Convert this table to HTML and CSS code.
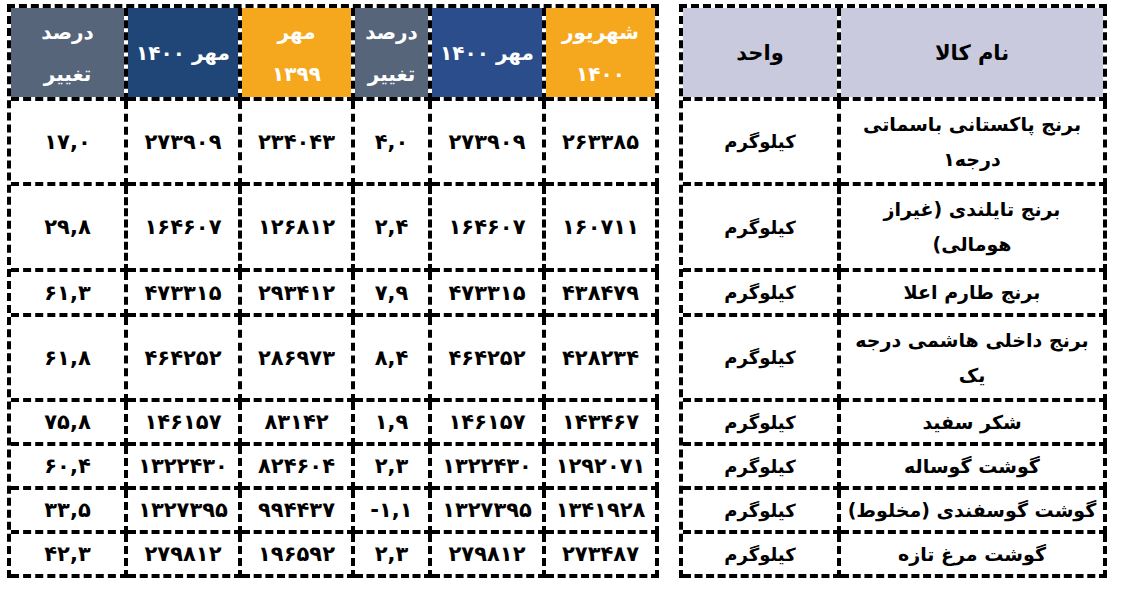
FILE: index.html
```html
<!DOCTYPE html>
<html lang="fa" dir="rtl">
<head>
<meta charset="utf-8">
<title>قیمت کالا</title>
<link rel="stylesheet" href="styles.css">
</head>
<body>
<div class="page">
  <div class="grid names">
    <div class="cell head lav">نام کالا</div>
    <div class="cell head lav">واحد</div>

    <div class="cell name">برنج پاکستانی باسماتی<br>درجه۱</div>
    <div class="cell unit">کیلوگرم</div>
    <div class="cell name">برنج تایلندی (غیراز<br>هومالی)</div>
    <div class="cell unit">کیلوگرم</div>
    <div class="cell name">برنج طارم اعلا</div>
    <div class="cell unit">کیلوگرم</div>
    <div class="cell name">برنج داخلی هاشمی درجه<br>یک</div>
    <div class="cell unit">کیلوگرم</div>
    <div class="cell name">شکر سفید</div>
    <div class="cell unit">کیلوگرم</div>
    <div class="cell name">گوشت گوساله</div>
    <div class="cell unit">کیلوگرم</div>
    <div class="cell name">گوشت گوسفندی (مخلوط)</div>
    <div class="cell unit">کیلوگرم</div>
    <div class="cell name">گوشت مرغ تازه</div>
    <div class="cell unit">کیلوگرم</div>
  </div>

  <div class="grid prices">
    <div class="cell head orange">شهریور<br>۱۴۰۰</div>
    <div class="cell head blue">مهر ۱۴۰۰</div>
    <div class="cell head slate">درصد<br>تغییر</div>
    <div class="cell head orange">مهر<br>۱۳۹۹</div>
    <div class="cell head navy">مهر ۱۴۰۰</div>
    <div class="cell head slate">درصد<br>تغییر</div>

    <div class="cell num">۲۶۳۳۸۵</div><div class="cell num">۲۷۳۹۰۹</div><div class="cell num">۴,۰</div><div class="cell num">۲۳۴۰۴۳</div><div class="cell num">۲۷۳۹۰۹</div><div class="cell num">۱۷,۰</div>
    <div class="cell num">۱۶۰۷۱۱</div><div class="cell num">۱۶۴۶۰۷</div><div class="cell num">۲,۴</div><div class="cell num">۱۲۶۸۱۲</div><div class="cell num">۱۶۴۶۰۷</div><div class="cell num">۲۹,۸</div>
    <div class="cell num">۴۳۸۴۷۹</div><div class="cell num">۴۷۳۳۱۵</div><div class="cell num">۷,۹</div><div class="cell num">۲۹۳۴۱۲</div><div class="cell num">۴۷۳۳۱۵</div><div class="cell num">۶۱,۳</div>
    <div class="cell num">۴۲۸۲۳۴</div><div class="cell num">۴۶۴۲۵۲</div><div class="cell num">۸,۴</div><div class="cell num">۲۸۶۹۷۳</div><div class="cell num">۴۶۴۲۵۲</div><div class="cell num">۶۱,۸</div>
    <div class="cell num">۱۴۳۴۶۷</div><div class="cell num">۱۴۶۱۵۷</div><div class="cell num">۱,۹</div><div class="cell num">۸۳۱۴۲</div><div class="cell num">۱۴۶۱۵۷</div><div class="cell num">۷۵,۸</div>
    <div class="cell num">۱۲۹۲۰۷۱</div><div class="cell num">۱۳۲۲۴۳۰</div><div class="cell num">۲,۳</div><div class="cell num">۸۲۴۶۰۴</div><div class="cell num">۱۳۲۲۴۳۰</div><div class="cell num">۶۰,۴</div>
    <div class="cell num">۱۳۴۱۹۲۸</div><div class="cell num">۱۳۲۷۳۹۵</div><div class="cell num">-۱,۱</div><div class="cell num">۹۹۴۴۳۷</div><div class="cell num">۱۳۲۷۳۹۵</div><div class="cell num">۳۳,۵</div>
    <div class="cell num">۲۷۳۴۸۷</div><div class="cell num">۲۷۹۸۱۲</div><div class="cell num">۲,۳</div><div class="cell num">۱۹۶۵۹۲</div><div class="cell num">۲۷۹۸۱۲</div><div class="cell num">۴۲,۳</div>
  </div>
</div>
</body>
</html>
```

FILE: styles.css
```css
html, body {
  margin: 0;
  padding: 0;
  background: #ffffff;
}

body {
  font-family: "DejaVu Sans", sans-serif;
  font-weight: bold;
  color: #000000;
}

.page {
  display: flex;
  flex-direction: row;
  gap: 20px;
  padding: 4px 19px 0 0;
}

.grid {
  display: grid;
  grid-template-rows: 93px 85px 86px 45px 85px 44px 44px 44px 44px;
  border-top: 4px dashed #000;
  border-left: 4px dashed #000;
}

.names {
  grid-template-columns: 266px 158px;
}

.prices {
  grid-template-columns: 113px 114px 77px 113px 114px 117px;
}

.cell {
  box-sizing: border-box;
  border-right: 4px dashed #000;
  border-bottom: 4px dashed #000;
  background-clip: padding-box;
  display: flex;
  align-items: center;
  justify-content: center;
  text-align: center;
}

.head {
  color: #ffffff;
  font-size: 20px;
  line-height: 42px;
}

.lav {
  background-color: #c9cade;
  color: #000000;
  font-size: 21px;
}

.orange { background-color: #f5a81e; }
.blue { background-color: #2c4d8c; }
.navy { background-color: #204677; }
.slate { background-color: #566579; }

.name {
  font-size: 19px;
  line-height: 35px;
}

.unit {
  font-size: 18px;
}

.num {
  direction: ltr;
  font-size: 21px;
}
```
